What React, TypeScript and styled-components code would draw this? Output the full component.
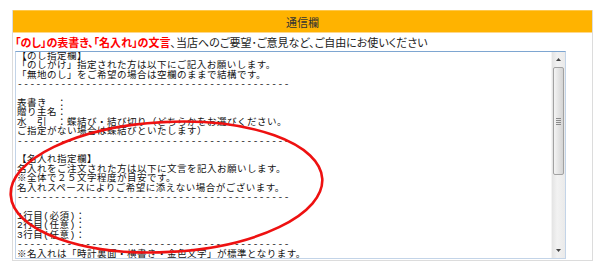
import React from 'react';
import styled, {createGlobalStyle} from 'styled-components';

const GlobalStyle = createGlobalStyle`
  body {
    margin: 0;
    background: #fff;
    font-family: "Noto Sans CJK JP", "Noto Sans", sans-serif;
    color: #222;
  }
`;

const DASH = '-'.repeat(44);

// テキストエリアに最初から入っている雛形
const template: string = [
  '【のし指定欄】',
  '「のしがけ」指定された方は以下にご記入お願いします。',
  '「無地のし」をご希望の場合は空欄のままで結構です。',
  DASH,
  '',
  '表書き　：',
  '贈り主名：',
  '水　引　：蝶結び・結び切り（どちらかをお選びください。',
  'ご指定がない場合は蝶結びといたします）',
  DASH,
  '',
  '【名入れ指定欄】',
  '名入れをご注文された方は以下に文言を記入お願いします。',
  '※全体で２５文字程度が目安です。',
  '名入れスペースによりご希望に添えない場合がございます。',
  DASH,
  '',
  '1行目(必須)：',
  '2行目(任意)：',
  '3行目(任意)：',
  DASH,
  '※名入れは「時計裏面・横書き・金色文字」が標準となります。',
].join('\n');

const Page = styled.div`
  position: relative;
  width: 603px;
  height: 270px;
  padding: 10px 10px 0 12px;
  box-sizing: border-box;
`;

const Panel = styled.section`
  width: 581px;
  border: 1px solid #dcdcdc;
  border-top: none;
  box-sizing: border-box;
  background: #fff;
`;

const Header = styled.div`
  height: 23px;
  padding-top: 1px;
  background: #ffb300;
  border-top: 1px solid #ffc84a;
  border-bottom: 1px solid #ffd88a;
  box-sizing: border-box;
  display: flex;
  align-items: center;
  justify-content: center;
  font-size: 11px;
  color: #333;
`;

const Body = styled.div`
  padding: 1px 0 1px 2px;
`;

const Note = styled.p`
  margin: 0;
  height: 17px;
  line-height: 17px;
  font-size: 11px;
  font-feature-settings: "palt";
  color: #222;
  white-space: nowrap;
`;

const Strong = styled.span`
  color: #f00;
  font-weight: bold;
`;

const TextFrame = styled.div`
  display: flex;
  width: 551px;
  height: 208px;
  box-sizing: border-box;
  border: 1px solid #c3d4e8;
  border-top-color: #7ea6d1;
  background: #fff;
`;

const TextArea = styled.textarea`
  flex: 1;
  margin: 0;
  padding: 0 1px;
  border: none;
  outline: none;
  resize: none;
  overflow: hidden;
  font-family: "Liberation Mono", "Noto Sans CJK JP", monospace;
  font-size: 9.5px;
  letter-spacing: 0.5px;
  line-height: 9.4px;
  color: #111;
  background: transparent;
  white-space: pre;
`;

const ScrollBar = styled.div`
  width: 13px;
  display: flex;
  flex-direction: column;
  background: linear-gradient(to right, #e4e4e4, #f2f2f2 40%, #eaeaea);
  border-left: 1px solid #f4f4f4;
`;

const ArrowButton = styled.div`
  height: 15px;
  display: flex;
  align-items: center;
  justify-content: center;
`;

const Track = styled.div`
  flex: 1;
  display: flex;
  flex-direction: column;
`;

const Thumb = styled.div<{$size: number}>`
  height: ${p => p.$size}px;
  margin: 0 1px;
  border: 1px solid #a2a2a2;
  border-radius: 2px;
  box-sizing: border-box;
  background: linear-gradient(to right, #f4f4f4, #e2e2e2 55%, #d4d4d4);
  display: flex;
  align-items: center;
  justify-content: center;
`;

const Overlay = styled.svg`
  position: absolute;
  left: 0;
  top: 0;
  pointer-events: none;
`;

const Arrow = ({down}: {down?: boolean}) => (
  <svg width="5" height="3" viewBox="0 0 5 3">
    <path d={down ? 'M0 0H5L2.5 3Z' : 'M0 3H5L2.5 0Z'} fill="#444" />
  </svg>
);

const Grip = () => (
  <svg width="5" height="7" viewBox="0 0 5 7">
    {[0.5, 2.5, 4.5, 6.5].map(y => (
      <line key={y} x1="0" x2="5" y1={y} y2={y} stroke="#8a8a8a" strokeWidth="1" />
    ))}
  </svg>
);

const App = (): JSX.Element => {
  return (
    <>
      <GlobalStyle />
      <Page>
        <Panel>
          <Header>通信欄</Header>
          <Body>
            <Note>
              <Strong>「のし」の表書き、「名入れ」の文言</Strong>、当店へのご要望･ご意見など、ご自由にお使いください
            </Note>
            <TextFrame>
              <TextArea defaultValue={template} spellCheck={false} />
              <ScrollBar>
                <ArrowButton>
                  <Arrow />
                </ArrowButton>
                <Track>
                  <Thumb $size={108}>
                    <Grip />
                  </Thumb>
                </Track>
                <ArrowButton>
                  <Arrow down />
                </ArrowButton>
              </ScrollBar>
            </TextFrame>
          </Body>
        </Panel>
        {/* 赤丸の注釈 */}
        <Overlay width="603" height="270" viewBox="0 0 603 270">
          <ellipse
            cx="166.5"
            cy="187"
            rx="156"
            ry="65"
            transform="rotate(-3 166.5 187)"
            fill="none"
            stroke="#ee1111"
            strokeWidth="2.6"
          />
        </Overlay>
      </Page>
    </>
  );
};

export default App;
